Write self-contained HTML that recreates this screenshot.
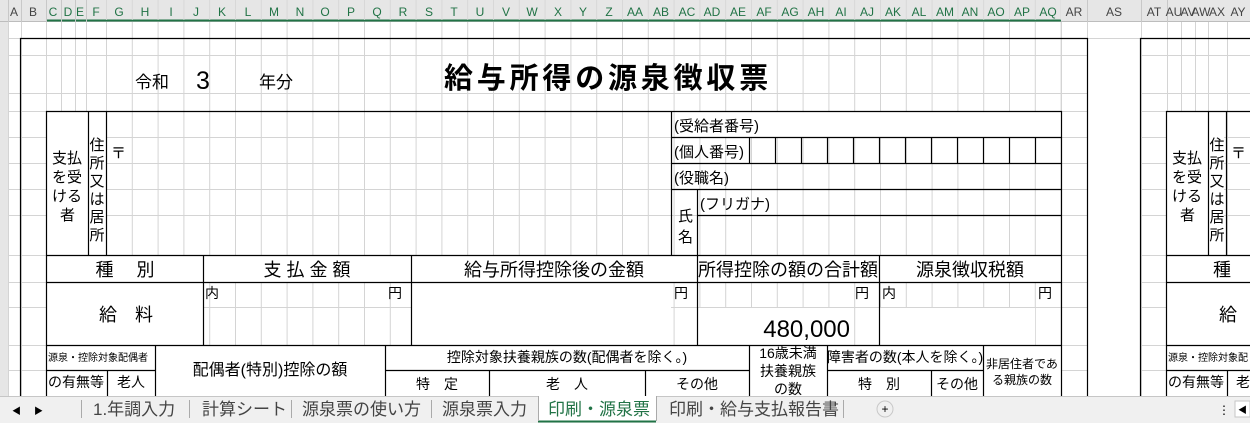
<!DOCTYPE html>
<html><head><meta charset="utf-8"><style>
html,body{margin:0;padding:0;background:#fff;overflow:hidden}
svg{display:block}
text{font-family:"Liberation Sans","Noto Sans CJK JP",sans-serif;fill:#000}
.h{font-size:12px;fill:#444}
.hg{font-size:12px;fill:#217346}
.t{font-size:15px}
.m{font-size:18px}
.s{font-size:14px}
.xs{font-size:10px}
.tab{font-size:17px;fill:#444}
</style></head><body>
<svg width="1250" height="423" viewBox="0 0 1250 423" xmlns="http://www.w3.org/2000/svg">
<defs>
<pattern id="gc" x="106" y="0" width="25.8" height="423" patternUnits="userSpaceOnUse"><rect x="0" y="0" width="1" height="423" fill="#d4d4d4"/></pattern>
</defs>
<rect x="106" y="22" width="955" height="374" fill="url(#gc)"/>
<g stroke="#d4d4d4" stroke-width="1">
<line x1="8.5" y1="22" x2="8.5" y2="396"/><line x1="21.5" y1="22" x2="21.5" y2="396"/><line x1="46.5" y1="22" x2="46.5" y2="396"/><line x1="61.5" y1="22" x2="61.5" y2="396"/><line x1="75.5" y1="22" x2="75.5" y2="396"/><line x1="86.5" y1="22" x2="86.5" y2="396"/>
<line x1="1061.5" y1="22" x2="1061.5" y2="396"/><line x1="1087.5" y1="22" x2="1087.5" y2="396"/><line x1="1141.5" y1="22" x2="1141.5" y2="396"/><line x1="1167.5" y1="22" x2="1167.5" y2="396"/><line x1="1181.5" y1="22" x2="1181.5" y2="396"/><line x1="1195.5" y1="22" x2="1195.5" y2="396"/><line x1="1208.5" y1="22" x2="1208.5" y2="396"/><line x1="1227.5" y1="22" x2="1227.5" y2="396"/>
<line x1="0" y1="38.5" x2="1250" y2="38.5"/><line x1="0" y1="55.5" x2="1250" y2="55.5"/><line x1="0" y1="93.5" x2="1250" y2="93.5"/><line x1="0" y1="111.5" x2="1250" y2="111.5"/><line x1="0" y1="137.5" x2="1250" y2="137.5"/><line x1="0" y1="163.5" x2="1250" y2="163.5"/><line x1="0" y1="189.5" x2="1250" y2="189.5"/><line x1="0" y1="215.5" x2="1250" y2="215.5"/><line x1="0" y1="255.5" x2="1250" y2="255.5"/><line x1="0" y1="282.5" x2="1250" y2="282.5"/><line x1="0" y1="307.5" x2="1250" y2="307.5"/><line x1="0" y1="345.5" x2="1250" y2="345.5"/><line x1="0" y1="370.5" x2="1250" y2="370.5"/>
</g>
<g fill="#fff">
<rect x="47" y="112" width="59" height="143"/>
<rect x="47" y="256" width="1014" height="26"/>
<rect x="47" y="283" width="156" height="62"/>
<rect x="412" y="283" width="259" height="62"/>
<rect x="698" y="308" width="155" height="37"/>
<rect x="880" y="308" width="155" height="37"/>
<rect x="47" y="346" width="1014" height="50"/>
<rect x="698" y="112" width="363" height="25"/>
<rect x="1167" y="112" width="57" height="143"/>
<rect x="1167" y="256" width="83" height="140"/>
<rect x="1088" y="39" width="52" height="357"/>
</g>
<rect x="0" y="0" width="1250" height="22" fill="#e6e6e6"/>
<rect x="0" y="22" width="8" height="374" fill="#e6e6e6"/>
<line x1="0" y1="21.5" x2="1250" y2="21.5" stroke="#bdbdbd"/>
<line x1="46" y1="20.5" x2="1061" y2="20.5" stroke="#217346" stroke-width="2"/>
<g stroke="#c8c8c8"><line x1="8.5" y1="0" x2="8.5" y2="22"/><line x1="21.5" y1="0" x2="21.5" y2="22"/><line x1="46.5" y1="0" x2="46.5" y2="22"/><line x1="61.5" y1="0" x2="61.5" y2="22"/><line x1="75.5" y1="0" x2="75.5" y2="22"/><line x1="86.5" y1="0" x2="86.5" y2="22"/><line x1="1087.5" y1="0" x2="1087.5" y2="22"/><line x1="1141.5" y1="0" x2="1141.5" y2="22"/><line x1="1167.5" y1="0" x2="1167.5" y2="22"/></g>
<rect x="106" y="0" width="955" height="20" fill="url(#gc)" opacity="0.8"/>
<g text-anchor="middle">
<text class="h" x="14" y="16">A</text><text class="h" x="33" y="16">B</text>
<text class="hg" x="53" y="16">C</text><text class="hg" x="68" y="16">D</text><text class="hg" x="80" y="16">E</text><text class="hg" x="96" y="16">F</text>
<text class="hg" x="119" y="16">G</text><text class="hg" x="145" y="16">H</text><text class="hg" x="171" y="16">I</text><text class="hg" x="196" y="16">J</text><text class="hg" x="222" y="16">K</text><text class="hg" x="248" y="16">L</text><text class="hg" x="274" y="16">M</text><text class="hg" x="300" y="16">N</text><text class="hg" x="325" y="16">O</text><text class="hg" x="351" y="16">P</text><text class="hg" x="377" y="16">Q</text><text class="hg" x="403" y="16">R</text><text class="hg" x="429" y="16">S</text><text class="hg" x="454" y="16">T</text><text class="hg" x="480" y="16">U</text><text class="hg" x="506" y="16">V</text><text class="hg" x="532" y="16">W</text><text class="hg" x="558" y="16">X</text><text class="hg" x="583" y="16">Y</text><text class="hg" x="609" y="16">Z</text><text class="hg" x="635" y="16">AA</text><text class="hg" x="661" y="16">AB</text><text class="hg" x="687" y="16">AC</text><text class="hg" x="712" y="16">AD</text><text class="hg" x="738" y="16">AE</text><text class="hg" x="764" y="16">AF</text><text class="hg" x="790" y="16">AG</text><text class="hg" x="816" y="16">AH</text><text class="hg" x="841" y="16">AI</text><text class="hg" x="867" y="16">AJ</text><text class="hg" x="893" y="16">AK</text><text class="hg" x="919" y="16">AL</text><text class="hg" x="945" y="16">AM</text><text class="hg" x="970" y="16">AN</text><text class="hg" x="996" y="16">AO</text><text class="hg" x="1022" y="16">AP</text><text class="hg" x="1048" y="16">AQ</text>
<text class="h" x="1074" y="16">AR</text><text class="h" x="1114" y="16">AS</text><text class="h" x="1154" y="16">AT</text><text class="h" x="1174" y="16" font-size="10">AU</text><text class="h" x="1188" y="16" font-size="10">AV</text><text class="h" x="1201" y="16" font-size="10">AW</text><text class="h" x="1217" y="16">AX</text><text class="h" x="1238" y="16">AY</text>
</g>
<g fill="none" stroke="#000" stroke-width="1.2">
<path d="M20.5 396V38.5H1087.5V396"/>
<path d="M1140.5 396V38.5H1250"/>
</g>
<text x="135" y="88" font-size="17">令和</text>
<text x="196" y="89" font-size="25">3</text>
<text x="259" y="88" font-size="17">年分</text>
<text x="444" y="88" font-size="29" font-weight="bold" letter-spacing="3.8">給与所得の源泉徴収票</text>
<g stroke="#000" stroke-width="1.2" fill="none">
<path d="M46.5 396V111.5H1061.5V396"/>
<line x1="88.5" y1="111" x2="88.5" y2="255"/><line x1="106.5" y1="111" x2="106.5" y2="255"/>
<line x1="671.5" y1="111" x2="671.5" y2="255"/>
<line x1="671" y1="137.5" x2="1061" y2="137.5"/><line x1="671" y1="163.5" x2="1061" y2="163.5"/><line x1="671" y1="189.5" x2="1061" y2="189.5"/><line x1="697" y1="215.5" x2="1061" y2="215.5"/>
<line x1="697.5" y1="189" x2="697.5" y2="255"/>
<line x1="749.5" y1="137" x2="749.5" y2="163"/><line x1="775.5" y1="137" x2="775.5" y2="163"/><line x1="801.5" y1="137" x2="801.5" y2="163"/><line x1="827.5" y1="137" x2="827.5" y2="163"/><line x1="853.5" y1="137" x2="853.5" y2="163"/><line x1="879.5" y1="137" x2="879.5" y2="163"/><line x1="905.5" y1="137" x2="905.5" y2="163"/><line x1="931.5" y1="137" x2="931.5" y2="163"/><line x1="957.5" y1="137" x2="957.5" y2="163"/><line x1="983.5" y1="137" x2="983.5" y2="163"/><line x1="1009.5" y1="137" x2="1009.5" y2="163"/><line x1="1035.5" y1="137" x2="1035.5" y2="163"/>
<line x1="46" y1="255.5" x2="1061" y2="255.5"/><line x1="46" y1="282.5" x2="1061" y2="282.5"/><line x1="46" y1="345.5" x2="1061" y2="345.5"/>
<line x1="203.5" y1="255" x2="203.5" y2="345"/><line x1="411.5" y1="255" x2="411.5" y2="345"/><line x1="697.5" y1="255" x2="697.5" y2="345"/><line x1="879.5" y1="255" x2="879.5" y2="345"/>
<line x1="46" y1="370.5" x2="155" y2="370.5"/><line x1="155.5" y1="345" x2="155.5" y2="396"/><line x1="107.5" y1="370" x2="107.5" y2="396"/>
<line x1="385.5" y1="345" x2="385.5" y2="396"/><line x1="385" y1="370.5" x2="749" y2="370.5"/><line x1="489.5" y1="370" x2="489.5" y2="396"/><line x1="645.5" y1="370" x2="645.5" y2="396"/>
<line x1="749.5" y1="345" x2="749.5" y2="396"/><line x1="827.5" y1="345" x2="827.5" y2="396"/><line x1="827" y1="370.5" x2="983" y2="370.5"/><line x1="931.5" y1="370" x2="931.5" y2="396"/><line x1="983.5" y1="345" x2="983.5" y2="396"/>
<path d="M1166.5 396V111.5H1250"/>
<line x1="1208.5" y1="111" x2="1208.5" y2="255"/><line x1="1226.5" y1="111" x2="1226.5" y2="255"/>
<line x1="1166" y1="255.5" x2="1250" y2="255.5"/><line x1="1166" y1="282.5" x2="1250" y2="282.5"/><line x1="1166" y1="345.5" x2="1250" y2="345.5"/><line x1="1166" y1="370.5" x2="1250" y2="370.5"/><line x1="1227.5" y1="370" x2="1227.5" y2="396"/>
</g>
<g class="t">
<text x="52" y="163">支払</text><text x="52" y="182">を受</text><text x="52" y="201">ける</text><text x="60" y="220">者</text>
</g>
<g class="t" text-anchor="middle"><text x="97" y="150">住</text><text x="97" y="168">所</text><text x="97" y="186">又</text><text x="97" y="204">は</text><text x="97" y="222">居</text><text x="97" y="240">所</text></g>
<text x="111" y="158" class="t">〒</text>
<text x="674" y="131" class="t">(受給者番号)</text>
<text x="674" y="157" class="t">(個人番号)</text>
<text x="674" y="183" class="t">(役職名)</text>
<text x="678" y="221" class="t">氏</text><text x="678" y="242" class="t">名</text>
<text x="700" y="209" class="t">(フリガナ)</text>
<g class="m" text-anchor="middle">
<text x="125" y="276">種　 別</text>
<text x="307" y="276">支 払 金 額</text>
<text x="554" y="276">給与所得控除後の金額</text>
<text x="788" y="276">所得控除の額の合計額</text>
<text x="970" y="276">源泉徴収税額</text>
<text x="126" y="321">給　料</text>
</g>
<text x="205" y="298" class="s">内</text><text x="388" y="298" class="s">円</text><text x="674" y="298" class="s">円</text><text x="855" y="298" class="s">円</text><text x="882" y="298" class="s">内</text><text x="1038" y="298" class="s">円</text>
<text x="850" y="337" font-size="24" text-anchor="end">480,000</text>
<text x="48" y="361" class="xs">源泉・控除対象配偶者</text>
<text x="48" y="387" class="s">の有無等</text><text x="131" y="387" class="s" text-anchor="middle">老人</text>
<text x="270" y="375" font-size="16" text-anchor="middle">配偶者(特別)控除の額</text>
<text x="567" y="362" class="s" text-anchor="middle">控除対象扶養親族の数(配偶者を除く。)</text>
<text x="437" y="389" class="s" text-anchor="middle">特　定</text><text x="567" y="389" class="s" text-anchor="middle">老　人</text><text x="697" y="389" class="s" text-anchor="middle">その他</text>
<g class="s" text-anchor="middle"><text x="788" y="358">16歳未満</text><text x="788" y="376">扶養親族</text><text x="788" y="394">の数</text></g>
<text x="905" y="362" class="s" text-anchor="middle">障害者の数(本人を除く。)</text>
<text x="879" y="389" class="s" text-anchor="middle">特　別</text><text x="957" y="389" class="s" text-anchor="middle">その他</text>
<text x="1022" y="368" text-anchor="middle" font-size="12">非居住者であ</text><text x="1022" y="384" text-anchor="middle" font-size="12">る親族の数</text>
<text x="1172" y="163" class="t">支払</text><text x="1172" y="182" class="t">を受</text><text x="1172" y="201" class="t">ける</text><text x="1180" y="220" class="t">者</text>
<g class="t" text-anchor="middle"><text x="1217" y="150">住</text><text x="1217" y="168">所</text><text x="1217" y="186">又</text><text x="1217" y="204">は</text><text x="1217" y="222">居</text><text x="1217" y="240">所</text></g>
<text x="1231" y="158" class="t">〒</text>
<text x="1213" y="276" class="m">種</text>
<text x="1219" y="321" class="m">給</text>
<text x="1168" y="361" class="xs">源泉・控除対象配</text>
<text x="1168" y="387" class="s">の有無等</text><text x="1236" y="387" class="s">老</text>
<rect x="0" y="396" width="1250" height="27" fill="#f0f0f0"/>
<line x1="0" y1="396.5" x2="1250" y2="396.5" stroke="#c6c6c6"/>
<text x="12" y="414" font-size="9" fill="#c0c0c0">◀</text><text x="34" y="414" font-size="9" fill="#c0c0c0">▶</text>
<g stroke="#aaa"><line x1="81.5" y1="400" x2="81.5" y2="418"/><line x1="189.5" y1="400" x2="189.5" y2="418"/><line x1="291.5" y1="400" x2="291.5" y2="418"/><line x1="431.5" y1="400" x2="431.5" y2="418"/><line x1="843.5" y1="400" x2="843.5" y2="418"/></g>
<rect x="538" y="396" width="118" height="25" fill="#fff"/>
<line x1="538" y1="421.5" x2="656" y2="421.5" stroke="#217346" stroke-width="2"/>
<line x1="538.5" y1="396" x2="538.5" y2="421" stroke="#aaa"/><line x1="656.5" y1="396" x2="656.5" y2="421" stroke="#aaa"/>
<text x="93" y="415" class="tab">1.年調入力</text>
<text x="202" y="415" class="tab">計算シート</text>
<text x="302" y="415" class="tab">源泉票の使い方</text>
<text x="442" y="415" class="tab">源泉票入力</text>
<text x="548" y="415" class="tab" style="fill:#217346">印刷・源泉票</text>
<text x="669" y="415" class="tab">印刷・給与支払報告書</text>
<circle cx="885" cy="409" r="8" fill="none" stroke="#c8c8c8"/><text x="885" y="413" font-size="12" fill="#c8c8c8" text-anchor="middle">+</text>
<text x="1218" y="414" font-size="12" fill="#aaa">⋮</text>
<rect x="1235" y="401" width="15" height="16" fill="#fff" stroke="#c6c6c6"/><text x="1238" y="413" font-size="9" fill="#666">◀</text>
</svg>
</body></html>
